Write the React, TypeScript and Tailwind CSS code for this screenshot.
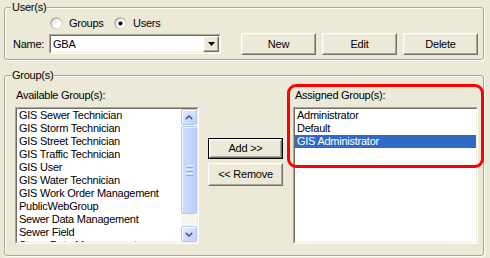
import React from "react";

function Raised({ children, className = "" }: { children?: React.ReactNode; className?: string }) {
  return (
    <div className={"border border-t-white border-l-white border-r-[#716f64] border-b-[#716f64] " + className}>
      <div className="flex h-full w-full items-center justify-center border border-t-[#f1efe2] border-l-[#f1efe2] border-r-[#aca899] border-b-[#aca899] bg-[#ece9d8]">
        {children}
      </div>
    </div>
  );
}

function Sunken({ children, className = "" }: { children?: React.ReactNode; className?: string }) {
  return (
    <div className={"border border-t-[#aca899] border-l-[#aca899] border-r-white border-b-white " + className}>
      <div className="flex h-full w-full border border-t-[#716f64] border-l-[#716f64] border-r-[#f1efe2] border-b-[#f1efe2] bg-white">
        {children}
      </div>
    </div>
  );
}

function Radio({ checked, id }: { checked?: boolean; id: string }) {
  return (
    <svg width="13" height="13" viewBox="0 0 13 13" className="shrink-0">
      <defs>
        <linearGradient id={id + "a"} x1="0" y1="0" x2="1" y2="1">
          <stop offset="0" stopColor="#8d8b7e" />
          <stop offset="1" stopColor="#f2f1ea" />
        </linearGradient>
        <linearGradient id={id + "b"} x1="0" y1="0" x2="1" y2="1">
          <stop offset="0" stopColor="#dcdad0" />
          <stop offset="0.6" stopColor="#ffffff" />
        </linearGradient>
      </defs>
      <circle cx="6.5" cy="6.5" r="6.2" fill={`url(#${id}a)`} />
      <circle cx="6.5" cy="6.5" r="5" fill={`url(#${id}b)`} />
      {checked && <circle cx="6.5" cy="6.5" r="2" fill="#000" />}
    </svg>
  );
}

function ScrollBtn({ up }: { up?: boolean }) {
  return (
    <div className="flex h-[16px] w-[16px] items-center justify-center rounded-[2px] border border-[#b4c8f6] bg-gradient-to-br from-[#e4ecfe] to-[#bed1fa] shadow-[inset_1px_1px_0_#fff]">
      <svg width="8" height="5" viewBox="0 0 8 5">
        <path d={up ? "M0.8 4.2 L4 1 L7.2 4.2" : "M0.8 0.8 L4 4 L7.2 0.8"} stroke="#4d6185" strokeWidth="1.7" fill="none" />
      </svg>
    </div>
  );
}

const available = [
  "GIS Sewer Technician",
  "GIS Storm Technician",
  "GIS Street Technician",
  "GIS Traffic Technician",
  "GIS User",
  "GIS Water Technician",
  "GIS Work Order Management",
  "PublicWebGroup",
  "Sewer Data Management",
  "Sewer Field",
  "Storm Data Management",
];

const assigned = ["Administrator", "Default", "GIS Administrator"];

export default function App() {
  return (
    <div className="relative h-[258px] w-[490px] overflow-hidden bg-[#ece9d8] pl-[4px] pt-[7px] font-['Liberation_Sans',Arial,sans-serif] text-[11px] leading-[13px] tracking-[-0.25px] text-black">
      {/* User(s) group */}
      <div className="relative h-[53px] w-[480px] rounded-[3px] border border-[#aca899] shadow-[inset_1px_1px_0_#fff,1px_1px_0_#fff]">
        <span className="absolute left-[6px] top-[-7px] bg-[#ece9d8] px-[1px]">User(s)</span>
        <div className="flex flex-col pt-[9px]">
          <div className="ml-[45px] flex h-[13px] items-center">
            <Radio id="r1" />
            <span className="ml-[6px] w-[45px]">Groups</span>
            <Radio id="r2" checked />
            <span className="ml-[6px]">Users</span>
          </div>
          <div className="ml-[8px] mt-[3px] flex h-[22px] items-center">
            <span className="w-[36px]">Name:</span>
            <Sunken className="h-[20px] w-[172px]">
              <div className="flex flex-1 items-center pl-[2px]">GBA</div>
              <Raised className="h-full w-[16px]">
                <svg width="7" height="4" viewBox="0 0 7 4">
                  <path d="M0 0 H7 L3.5 4 Z" fill="#000" />
                </svg>
              </Raised>
            </Sunken>
            <Raised className="ml-[20px] h-[22px] w-[75px]">New</Raised>
            <Raised className="ml-[6px] h-[22px] w-[75px]">Edit</Raised>
            <Raised className="ml-[6px] h-[22px] w-[75px]">Delete</Raised>
          </div>
        </div>
      </div>

      {/* Group(s) group */}
      <div className="relative mt-[15px] h-[181px] w-[480px] rounded-[3px] border border-[#aca899] shadow-[inset_1px_1px_0_#fff,1px_1px_0_#fff]">
        <span className="absolute left-[6px] top-[-7px] bg-[#ece9d8] px-[1px]">Group(s)</span>
        <div className="flex pl-[10px] pt-[13px]">
          <div className="flex w-[184px] flex-col">
            <span className="ml-[1px] h-[13px]">Available Group(s):</span>
            <Sunken className="mt-[5px] h-[137px] w-[184px]">
              <div className="flex-1 overflow-hidden">
                {available.map((t) => (
                  <div key={t} className="h-[13px] whitespace-nowrap pl-[2px]">
                    {t}
                  </div>
                ))}
              </div>
              <div className="flex w-[16px] flex-col bg-[#f6f5f0]">
                <ScrollBtn up />
                <div className="mt-[1px] flex h-[88px] flex-col items-center justify-center gap-[1px] rounded-[2px] border border-[#b4c8f6] bg-gradient-to-r from-[#cddcfc] to-[#bfd1fa] shadow-[inset_1px_1px_0_#eef3fe]">
                  <div className="h-[1px] w-[7px] bg-[#eef4fe]" />
                  <div className="h-[1px] w-[7px] bg-[#8cb0f8]" />
                  <div className="h-[1px] w-[7px] bg-[#eef4fe]" />
                  <div className="h-[1px] w-[7px] bg-[#8cb0f8]" />
                  <div className="h-[1px] w-[7px] bg-[#eef4fe]" />
                  <div className="h-[1px] w-[7px] bg-[#8cb0f8]" />
                </div>
                <div className="flex-1" />
                <ScrollBtn />
              </div>
            </Sunken>
          </div>

          <div className="ml-[9px] flex w-[75px] flex-col pt-[49px]">
            <div className="h-[21px] w-[75px] border border-black">
              <Raised className="h-full w-full">Add &gt;&gt;</Raised>
            </div>
            <Raised className="mt-[4px] h-[23px] w-[75px]">&lt;&lt; Remove</Raised>
          </div>

          <div className="ml-[10px] flex w-[185px] flex-col">
            <span className="ml-[2px] h-[13px]">Assigned Group(s):</span>
            <Sunken className="mt-[5px] h-[137px] w-[185px]">
              <div className="flex-1 overflow-hidden">
                {assigned.map((t, i) => (
                  <div
                    key={t}
                    className={
                      "h-[13px] whitespace-nowrap pl-[2px] " + (i === 2 ? "bg-[#316ac5] text-white" : "")
                    }
                  >
                    {t}
                  </div>
                ))}
              </div>
            </Sunken>
          </div>
        </div>
      </div>

      {/* red highlight annotation */}
      <div className="pointer-events-none absolute left-[287px] top-[84px] h-[84px] w-[197px] rounded-[9px] border-[3px] border-[#ff0000]" />
    </div>
  );
}
